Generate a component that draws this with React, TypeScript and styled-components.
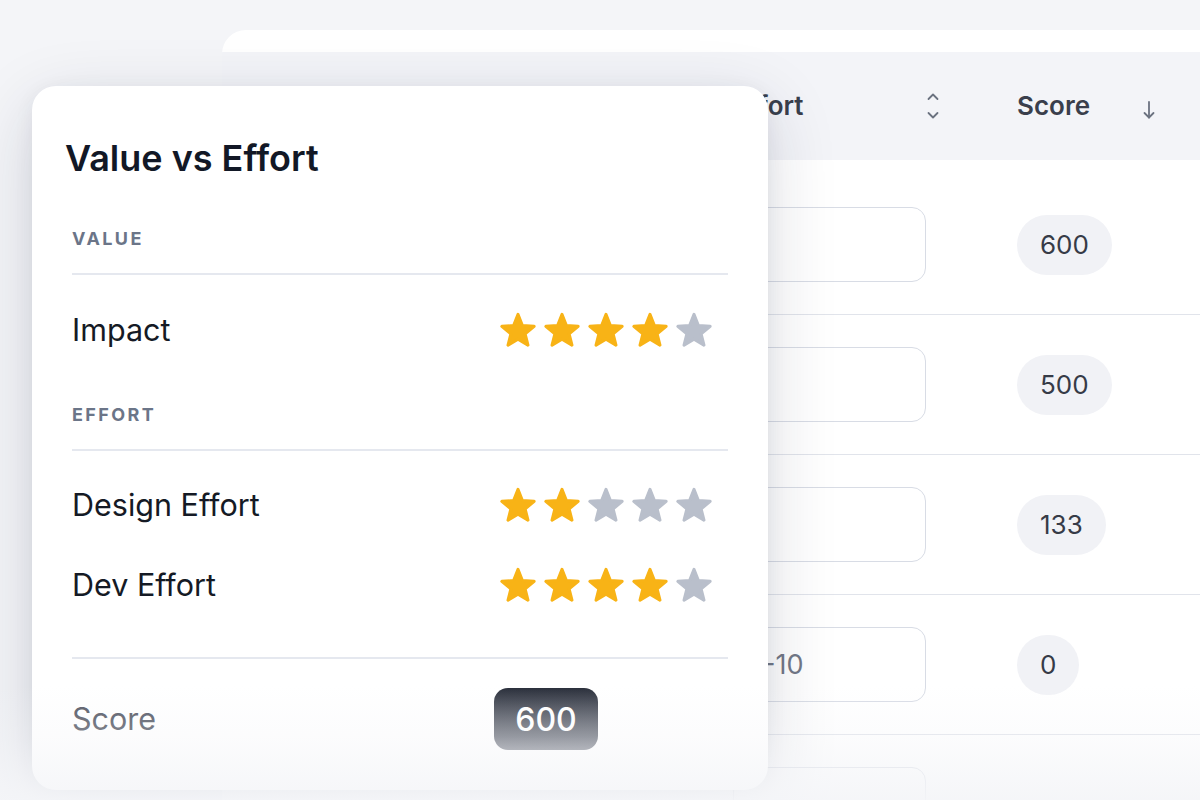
import React from "react";
import styled, { createGlobalStyle } from "styled-components";

const Global = createGlobalStyle`
  html, body { margin: 0; padding: 0; background: #f4f5f8; }
  body { font-family: Inter, "Noto Sans", sans-serif; overflow: hidden; }
  * { box-sizing: border-box; }
`;

const Stage = styled.div`
  width: 1200px;
  height: 800px;
  overflow: hidden;
  display: grid;
  grid-template-columns: 1fr;
  grid-template-rows: 1fr;
  background: #f4f5f8;
`;

const BackCard = styled.section`
  grid-area: 1 / 1;
  align-self: start;
  margin: 30px 0 0 222px;
  height: 770px;
  background: #ffffff;
  border-top-left-radius: 24px;
  display: flex;
  flex-direction: column;
  overflow: hidden;
`;

const TopStrip = styled.div`
  height: 22px;
  flex: none;
`;

const HeaderRow = styled.div`
  flex: none;
  height: 108px;
  display: grid;
  grid-template-columns: 451px 344px 1fr;
  align-items: center;
  background: #f3f4f8;
`;

const HeaderCell = styled.div<{ $padLeft?: number; $padRight?: number; $gap?: number; $spread?: boolean }>`
  display: flex;
  align-items: center;
  justify-content: ${(p) => (p.$spread ? "space-between" : "flex-start")};
  gap: ${(p) => p.$gap ?? 0}px;
  padding-left: ${(p) => p.$padLeft ?? 0}px;
  padding-right: ${(p) => p.$padRight ?? 0}px;
  font-size: 26px;
  font-weight: 600;
  color: #3a3f4c;
`;

const HeaderText = styled.span`
  line-height: 32px;
`;

const Rows = styled.div`
  padding-top: 15px;
  display: flex;
  flex-direction: column;
`;

const Row = styled.div`
  flex: none;
  height: 140px;
  display: grid;
  grid-template-columns: 451px 344px 1fr;
  align-items: center;
  border-bottom: 1.5px solid #e1e4eb;
`;

const Cell = styled.div<{ $padLeft?: number; $padRight?: number }>`
  display: flex;
  align-items: center;
  padding-left: ${(p) => p.$padLeft ?? 0}px;
  padding-right: ${(p) => p.$padRight ?? 0}px;
`;

const NumInput = styled.input`
  width: 100%;
  height: 75px;
  border: 1.5px solid #d8dce5;
  border-radius: 14px;
  padding: 0 18px;
  font-family: Inter, "Noto Sans", sans-serif;
  font-size: 27px;
  color: #111827;
  background: #ffffff;
  outline: none;
  &::placeholder {
    color: #737987;
  }
`;

const Pill = styled.span`
  display: inline-flex;
  align-items: center;
  height: 60px;
  padding: 0 23px;
  border-radius: 30px;
  background: #f1f2f6;
  font-size: 26px;
  color: #363b47;
`;

const FrontCard = styled.section`
  grid-area: 1 / 1;
  align-self: start;
  justify-self: start;
  position: relative;
  z-index: 1;
  margin: 86px 0 0 32px;
  width: 736px;
  height: 704px;
  background: #ffffff;
  border-radius: 24px;
  box-shadow: 0 20px 70px rgba(25, 33, 61, 0.16), 0 4px 20px rgba(25, 33, 61, 0.06);
  padding: 52px 40px 0;
`;

const Title = styled.h2`
  margin: 0 0 0 -7px;
  font-size: 36px;
  line-height: 40px;
  font-weight: 600;
  color: #121826;
`;

const SectionLabel = styled.div<{ $top: number }>`
  margin-top: ${(p) => p.$top}px;
  font-size: 18px;
  line-height: 20px;
  font-weight: 700;
  letter-spacing: 2.4px;
  color: #6b7588;
  padding-bottom: 24px;
  border-bottom: 2px solid #e5e8ef;
`;

const RatingRow = styled.div<{ $top: number }>`
  margin-top: ${(p) => p.$top}px;
  height: 56px;
  display: grid;
  grid-template-columns: 422px 1fr;
  align-items: center;
`;

const RowLabel = styled.span<{ $muted?: boolean }>`
  font-size: 30.5px;
  line-height: 36px;
  color: ${(p) => (p.$muted ? "#4f5360" : "#151a25")};
`;

const Stars = styled.div`
  display: flex;
  gap: 4px;
  padding-left: 4px;
`;

const Divider = styled.div<{ $top: number }>`
  margin-top: ${(p) => p.$top}px;
  height: 2px;
  background: #e5e8ef;
`;

const ScoreRow = styled.div`
  margin-top: 29px;
  height: 62px;
  display: grid;
  grid-template-columns: 422px 1fr;
  align-items: center;
`;

const Badge = styled.span`
  justify-self: start;
  width: 104px;
  height: 62px;
  border-radius: 14px;
  background: linear-gradient(180deg, #282d39 0%, #80848e 100%);
  color: #ffffff;
  font-size: 32px;
  font-weight: 500;
  display: flex;
  align-items: center;
  justify-content: center;
`;

const Fade = styled.div`
  grid-area: 1 / 1;
  align-self: end;
  position: relative;
  z-index: 2;
  height: 115px;
  pointer-events: none;
  background: linear-gradient(
    180deg,
    rgba(244, 245, 248, 0) 0%,
    rgba(244, 245, 248, 0.3) 45%,
    rgba(244, 245, 248, 0.92) 100%
  );
`;

const STAR_POINTS =
  "20,4.4 24.41,15.53 36.17,16.35 27.13,23.92 29.99,35.15 20,29.1 10.01,35.15 12.87,23.92 3.83,16.35 15.59,15.53";

const Star = ({ on }: { on: boolean }) => {
  const c = on ? "#f8b316" : "#b9bfcb";
  return (
    <svg width="40" height="40" viewBox="0 0 40 40">
      <polygon
        points={STAR_POINTS}
        fill={c}
        stroke={c}
        strokeWidth="3"
        strokeLinejoin="round"
      />
    </svg>
  );
};

const Rating = ({ value }: { value: number }) => (
  <Stars>
    {[1, 2, 3, 4, 5].map((i) => (
      <Star key={i} on={i <= value} />
    ))}
  </Stars>
);

const SortIcon = () => (
  <svg width="14" height="30" viewBox="0 0 14 30" fill="none">
    <path d="M2.5 8 L7 3.5 L11.5 8" stroke="#6b7280" strokeWidth="1.8" strokeLinecap="round" strokeLinejoin="round" />
    <path d="M2.5 22 L7 26.5 L11.5 22" stroke="#6b7280" strokeWidth="1.8" strokeLinecap="round" strokeLinejoin="round" />
  </svg>
);

const DownArrow = () => (
  <svg width="14" height="20" viewBox="0 0 14 20" fill="none" style={{ marginTop: 8 }}>
    <path d="M7 2 V17.5" stroke="#6b7280" strokeWidth="1.8" strokeLinecap="round" />
    <path d="M2.5 13 L7 17.5 L11.5 13" stroke="#6b7280" strokeWidth="1.8" strokeLinecap="round" strokeLinejoin="round" />
  </svg>
);

const tableRows: { dev: string; score?: string }[] = [
  { dev: " ", score: "600" },
  { dev: " ", score: "500" },
  { dev: " ", score: "133" },
  { dev: "", score: "0" },
  { dev: " " },
];

export default function App() {
  return (
    <>
      <Global />
      <Stage>
        <BackCard>
          <TopStrip />
          <HeaderRow>
            <HeaderCell />
            <HeaderCell $spread $padLeft={5} $padRight={77}>
              <HeaderText>Dev Effort</HeaderText>
              <SortIcon />
            </HeaderCell>
            <HeaderCell $gap={52}>
              <HeaderText>Score</HeaderText>
              <DownArrow />
            </HeaderCell>
          </HeaderRow>
          <Rows>
            {tableRows.map((r, i) => (
              <Row key={i}>
                <Cell />
                <Cell $padLeft={60} $padRight={91}>
                  <NumInput readOnly defaultValue={r.dev} placeholder="1-10" />
                </Cell>
                <Cell>{r.score !== undefined && <Pill>{r.score}</Pill>}</Cell>
              </Row>
            ))}
          </Rows>
        </BackCard>

        <FrontCard>
          <Title>Value vs Effort</Title>
          <SectionLabel $top={51}>VALUE</SectionLabel>
          <RatingRow $top={27}>
            <RowLabel>Impact</RowLabel>
            <Rating value={4} />
          </RatingRow>
          <SectionLabel $top={47}>EFFORT</SectionLabel>
          <RatingRow $top={26}>
            <RowLabel>Design Effort</RowLabel>
            <Rating value={2} />
          </RatingRow>
          <RatingRow $top={24}>
            <RowLabel>Dev Effort</RowLabel>
            <Rating value={4} />
          </RatingRow>
          <Divider $top={44} />
          <ScoreRow>
            <RowLabel $muted>Score</RowLabel>
            <Badge>600</Badge>
          </ScoreRow>
        </FrontCard>

        <Fade />
      </Stage>
    </>
  );
}
